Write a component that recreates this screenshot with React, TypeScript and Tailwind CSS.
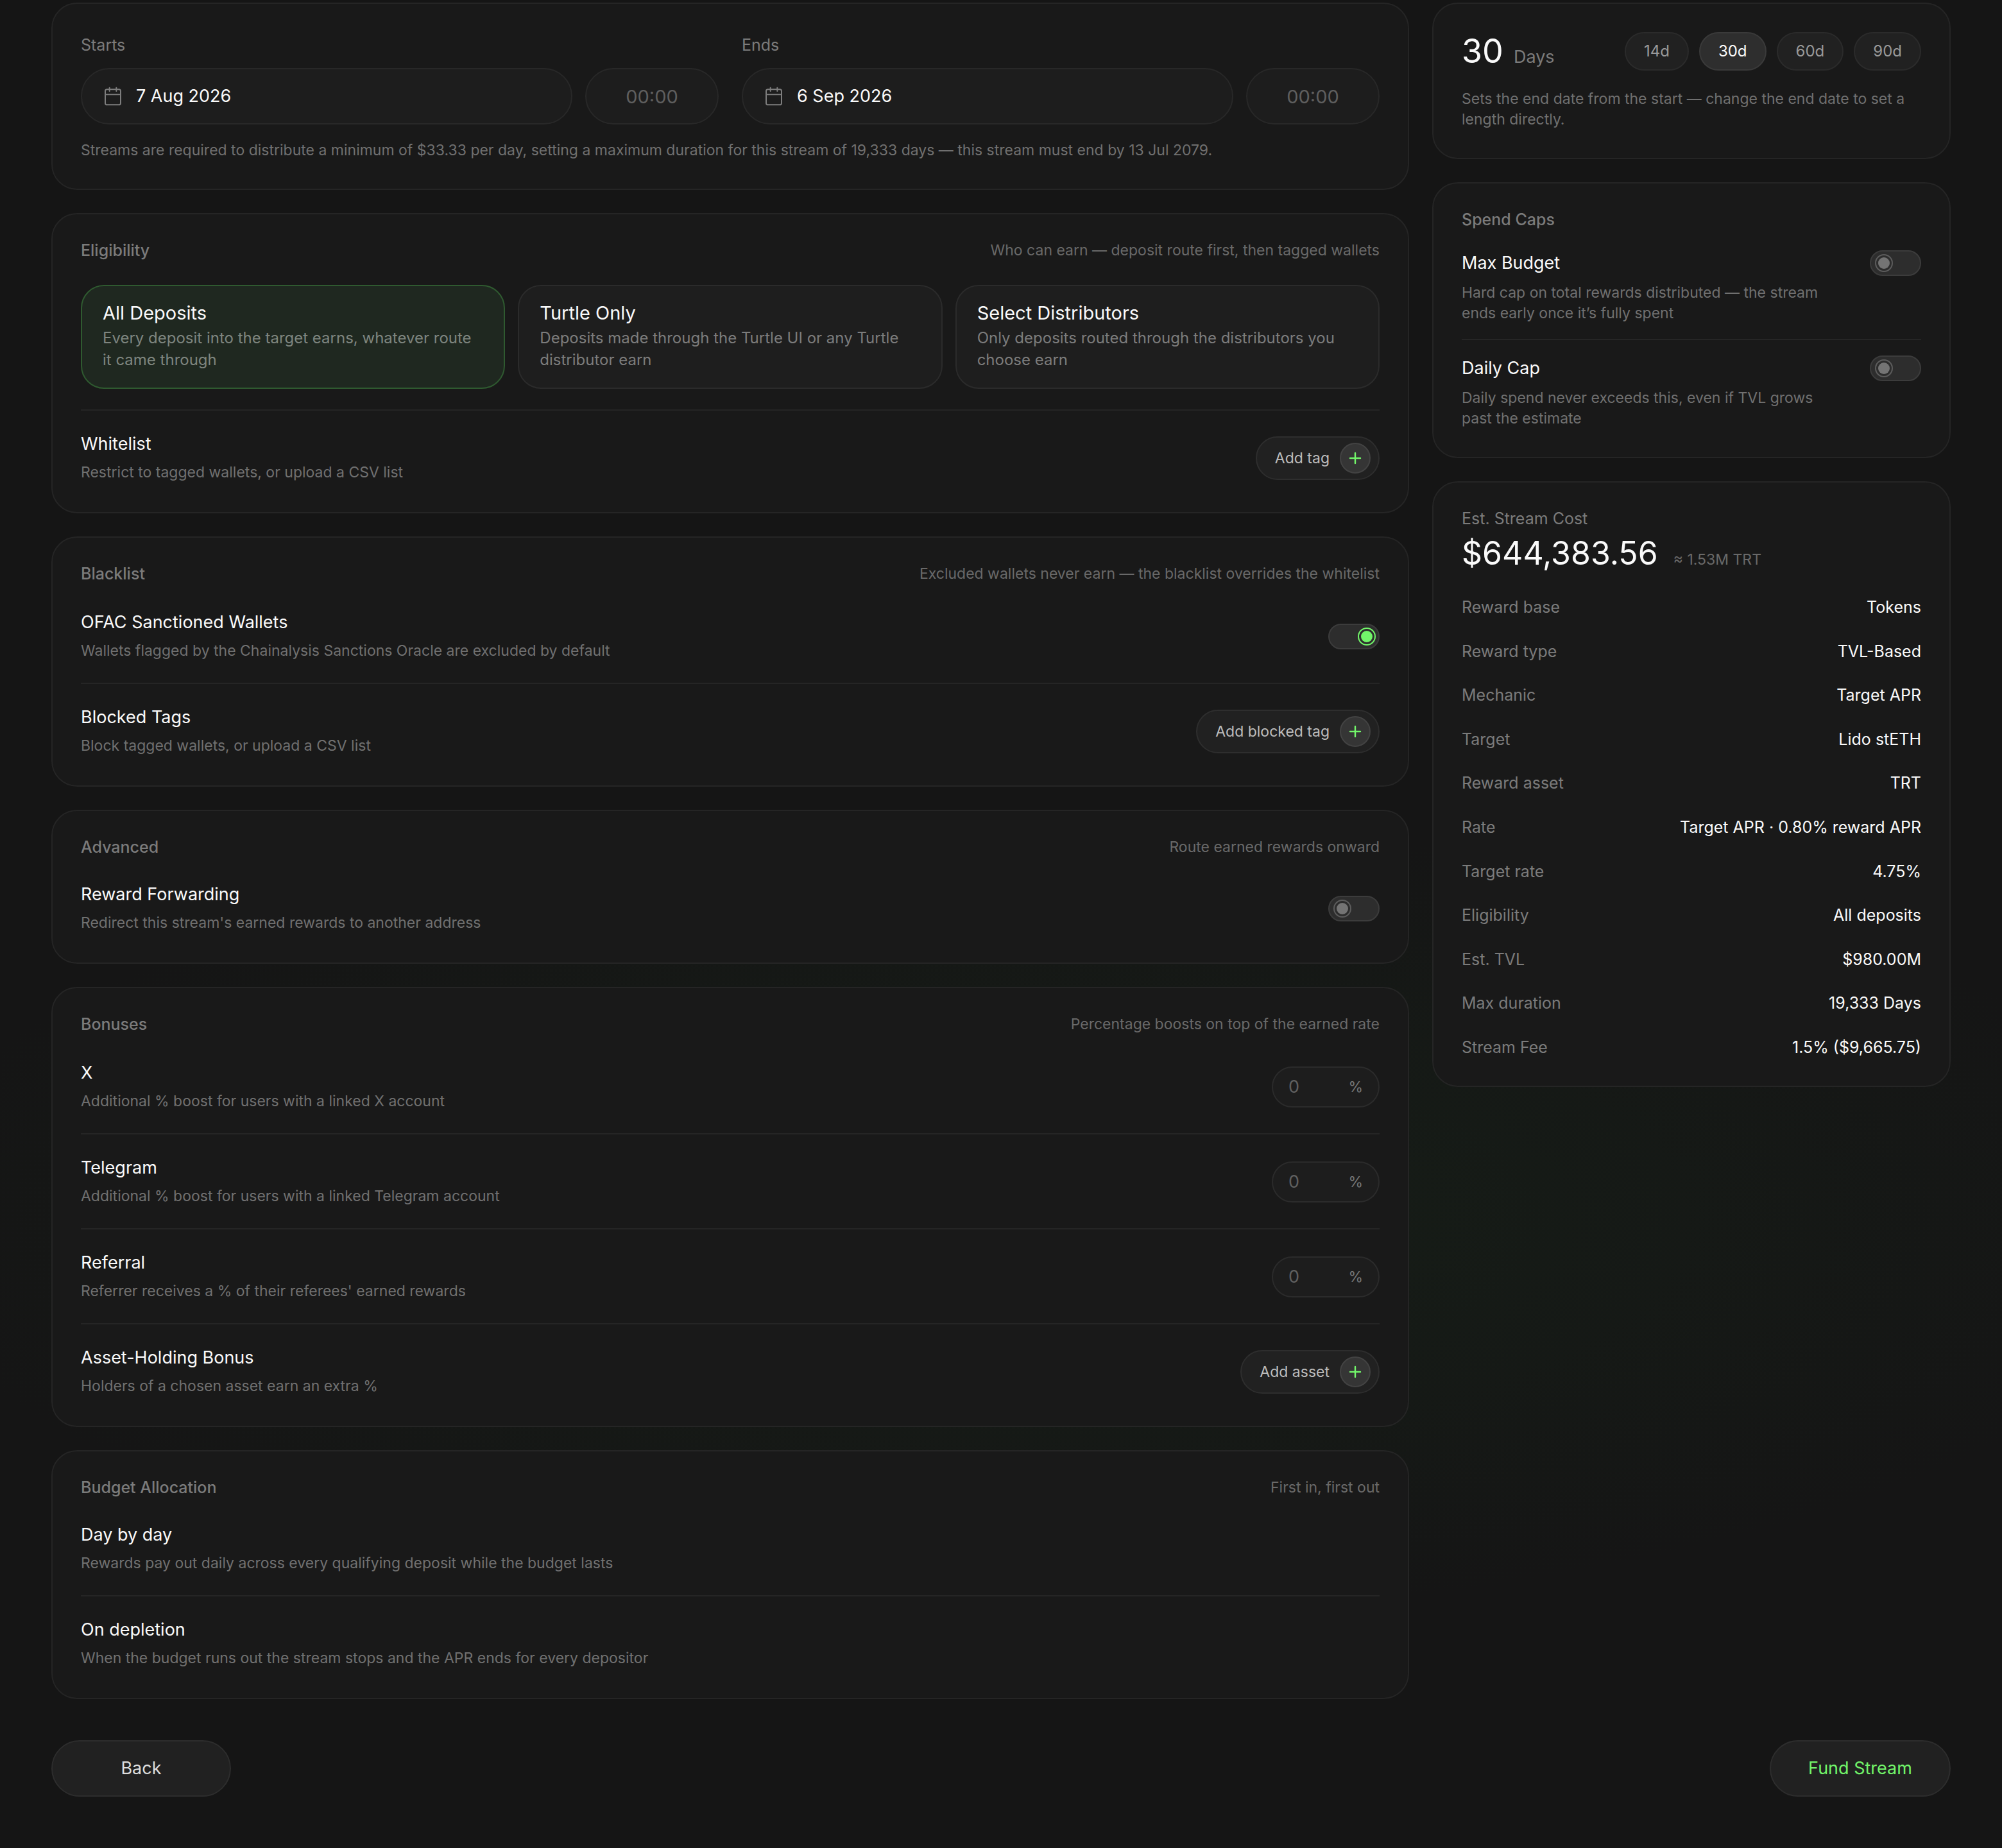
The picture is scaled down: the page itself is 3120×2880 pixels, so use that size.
import { useId, type ReactNode } from "react";
import { Calendar } from "lucide-react";

const hint = "text-[23px] leading-10 text-[#696969]";

function Card({ children, className = "" }: { children: ReactNode; className?: string }) {
  return (
    <section className={`rounded-[40px] border-2 border-[#252525] bg-[#191919] px-11 ${className}`}>{children}</section>
  );
}

function CardHeader({ title, note }: { title: string; note?: string }) {
  return (
    <header className="mb-1 flex items-center justify-between">
      <h2 className="text-[25px] leading-10 font-medium text-[#7b7b7b]">{title}</h2>
      {note && <p className={hint}>{note}</p>}
    </header>
  );
}

function Toggle({ id, on = false }: { id: string; on?: boolean }) {
  return (
    <input
      id={id}
      type="checkbox"
      role="switch"
      defaultChecked={on}
      className="flex h-10 w-20 shrink-0 appearance-none items-center rounded-full border-2 border-[#3c3c3c] bg-[#2d2d2d] px-1.5 text-[#747474] before:size-7 before:rounded-full before:border-2 before:border-[#5c5c5c] before:bg-current before:bg-clip-content before:p-[3px] before:content-[''] checked:justify-end checked:px-1 checked:text-[#72f56a] checked:before:border-current"
    />
  );
}

function AddButton({ children }: { children: string }) {
  return (
    <button
      type="button"
      className="flex h-[68px] items-center gap-4 rounded-full border-2 border-[#2e2e2e] bg-[#212121] pr-3 pl-7 text-[23px] text-[#bdbdbd]"
    >
      {children}
      <span className="flex size-12 items-center justify-center rounded-full border-2 border-[#434343] bg-[#353535] text-[#72f56a]">
        <svg viewBox="0 0 20 20" className="size-5" fill="none" stroke="currentColor" strokeWidth="2.4" strokeLinecap="round" aria-hidden="true">
          <path d="M10 2v16M2 10h16" />
        </svg>
      </span>
    </button>
  );
}

function PercentInput({ id }: { id: string }) {
  return (
    <span className="flex h-16 w-[168px] items-center rounded-full border-2 border-[#2b2b2b] bg-[#1d1d1d] px-6 text-[#777777]">
      <input
        id={id}
        inputMode="decimal"
        placeholder="0"
        className="w-full min-w-0 bg-transparent text-[27px] outline-none placeholder:text-[#606060]"
      />
      <span className="text-[23px]">%</span>
    </span>
  );
}

type RowProps = {
  title: string;
  text: string;
  divided?: boolean;
  compact?: boolean;
  control?: (id: string) => ReactNode;
};

function Row({ title, text, divided, compact, control }: RowProps) {
  const id = useId();
  return (
    <div
      className={`flex items-center justify-between gap-12 ${divided ? "border-t-2 border-[#252525]" : ""} ${
        compact ? "py-[30px]" : "pt-8 pb-[30px]"
      }`}
    >
      <div>
        <label htmlFor={id} className="block text-[27px] leading-10 text-[#fafafa]">
          {title}
        </label>
        <p className="mt-1 text-[23px] leading-10 text-[#707070]">{text}</p>
      </div>
      {control?.(id)}
    </div>
  );
}

function DateField({ label, date }: { label: string; date: string }) {
  const id = useId();
  return (
    <div className="min-w-0 flex-1">
      <label htmlFor={id} className="block text-[25px] leading-10 text-[#7b7b7b]">
        {label}
      </label>
      <div className="mt-4 flex gap-5">
        <div className="flex h-[88px] min-w-0 flex-1 items-center gap-5 rounded-full border-2 border-[#282828] bg-[#1d1d1d] px-8">
          <Calendar className="size-8 shrink-0 text-[#7d7d7d]" strokeWidth={1.5} aria-hidden="true" />
          <input id={id} defaultValue={date} className="w-full min-w-0 bg-transparent text-[27px] text-[#fafafa] outline-none" />
        </div>
        <input
          aria-label={`${label} time`}
          placeholder="00:00"
          className="h-[88px] w-52 rounded-full border-2 border-[#282828] bg-[#1d1d1d] text-center text-[29px] outline-none placeholder:text-[#5f5f5f]"
        />
      </div>
    </div>
  );
}

const routes = [
  { title: "All Deposits", text: "Every deposit into the target earns, whatever route it came through" },
  { title: "Turtle Only", text: "Deposits made through the Turtle UI or any Turtle distributor earn" },
  { title: "Select Distributors", text: "Only deposits routed through the distributors you choose earn" },
];

function RouteOptions() {
  return (
    <div className="mt-[34px] mb-8 grid grid-cols-3 gap-5">
      {routes.map((r, i) => (
        <button
          key={r.title}
          type="button"
          aria-pressed={i === 0}
          className={`rounded-[36px] border-2 px-8 pt-5 pb-[26px] text-left ${
            i === 0 ? "border-[#2f5a30] bg-[#1f2820]" : "border-[#2b2b2b] bg-[#1e1e1e]"
          }`}
        >
          <span className="block text-[29px] leading-[44px] text-[#fafafa]">{r.title}</span>
          <span className={`block text-[24px] leading-[34px] ${i === 0 ? "text-[#7e857f]" : "text-[#7c7c7c]"}`}>{r.text}</span>
        </button>
      ))}
    </div>
  );
}

function DurationCard() {
  return (
    <Card className="py-11">
      <div className="flex items-center justify-between">
        <p className="flex items-baseline gap-4">
          <span className="text-[52px] leading-[60px] text-[#fafafa]">30</span>
          <span className="text-[27px] text-[#7b7b7b]">Days</span>
        </p>
        <div className="flex gap-4">
          {["14d", "30d", "60d", "90d"].map((d) => (
            <button
              key={d}
              type="button"
              aria-pressed={d === "30d"}
              className={`h-[60px] rounded-full border-2 px-7 text-[24px] ${
                d === "30d" ? "border-[#3a3a3a] bg-[#2e2e2e] text-[#fafafa]" : "border-[#2b2b2b] bg-[#212121] text-[#999999]"
              }`}
            >
              {d}
            </button>
          ))}
        </div>
      </div>
      <p className="mt-7 text-[23px] leading-8 text-[#707070]">
        Sets the end date from the start — change the end date to set a length directly.
      </p>
    </Card>
  );
}

function CapRow({ title, text, divided }: { title: string; text: string; divided?: boolean }) {
  const id = useId();
  return (
    <div className={`flex items-start justify-between gap-14 py-6 ${divided ? "border-t-2 border-[#262626]" : ""}`}>
      <div>
        <label htmlFor={id} className="block text-[27px] leading-10 text-[#fafafa]">
          {title}
        </label>
        <p className="mt-2.5 text-[23px] leading-8 text-[#707070]">{text}</p>
      </div>
      <Toggle id={id} />
    </div>
  );
}

const summary = [
  ["Reward base", "Tokens"],
  ["Reward type", "TVL-Based"],
  ["Mechanic", "Target APR"],
  ["Target", "Lido stETH"],
  ["Reward asset", "TRT"],
  ["Rate", "Target APR · 0.80% reward APR"],
  ["Target rate", "4.75%"],
  ["Eligibility", "All deposits"],
  ["Est. TVL", "$980.00M"],
  ["Max duration", "19,333 Days"],
  ["Stream Fee", "1.5% ($9,665.75)"],
];

function CostCard() {
  return (
    <Card className="pt-9 pb-10">
      <h2 className="text-[25px] leading-10 text-[#7b7b7b]">Est. Stream Cost</h2>
      <p className="flex items-baseline gap-6">
        <span className="text-[50px] leading-[68px] text-[#fafafa]">$644,383.56</span>
        <span className="text-[23px] text-[#696969]">≈ 1.53M TRT</span>
      </p>
      <dl className="mt-[30px] flex h-[726px] flex-col justify-between text-[25px] leading-10">
        {summary.map(([k, v]) => (
          <div key={k} className="flex justify-between">
            <dt className="text-[#7b7b7b]">{k}</dt>
            <dd className="text-[#fafafa]">{v}</dd>
          </div>
        ))}
      </dl>
    </Card>
  );
}

export default function App() {
  return (
    <div className="min-h-screen bg-[#151515] bg-[radial-gradient(ellipse_58%_620px_at_52%_1900px,#161e17,#151515)] px-20 pt-1 pb-20 font-['Inter',sans-serif]">
      <main className="grid grid-cols-[minmax(0,1fr)_808px] items-start gap-9">
        <div className="flex flex-col gap-9">
          <Card className="py-11">
            <div className="flex gap-9">
              <DateField label="Starts" date="7 Aug 2026" />
              <DateField label="Ends" date="6 Sep 2026" />
            </div>
            <p className="mt-6 text-[23px] leading-8 text-[#707070]">
              Streams are required to distribute a minimum of $33.33 per day, setting a maximum duration for this stream of 19,333
              days — this stream must end by 13 Jul 2079.
            </p>
          </Card>

          <Card className="pt-9 pb-3">
            <CardHeader title="Eligibility" note="Who can earn — deposit route first, then tagged wallets" />
            <RouteOptions />
            <Row
              divided
              title="Whitelist"
              text="Restrict to tagged wallets, or upload a CSV list"
              control={() => <AddButton>Add tag</AddButton>}
            />
          </Card>

          <Card className="pt-9 pb-3">
            <CardHeader title="Blacklist" note="Excluded wallets never earn — the blacklist overrides the whitelist" />
            <Row
              title="OFAC Sanctioned Wallets"
              text="Wallets flagged by the Chainalysis Sanctions Oracle are excluded by default"
              control={(id) => <Toggle id={id} on />}
            />
            <Row
              divided
              title="Blocked Tags"
              text="Block tagged wallets, or upload a CSV list"
              control={() => <AddButton>Add blocked tag</AddButton>}
            />
          </Card>

          <Card className="pt-9 pb-3">
            <CardHeader title="Advanced" note="Route earned rewards onward" />
            <Row
              compact
              title="Reward Forwarding"
              text="Redirect this stream's earned rewards to another address"
              control={(id) => <Toggle id={id} />}
            />
          </Card>

          <Card className="pt-9 pb-3">
            <CardHeader title="Bonuses" note="Percentage boosts on top of the earned rate" />
            <Row title="X" text="Additional % boost for users with a linked X account" control={(id) => <PercentInput id={id} />} />
            <Row
              divided
              title="Telegram"
              text="Additional % boost for users with a linked Telegram account"
              control={(id) => <PercentInput id={id} />}
            />
            <Row
              divided
              title="Referral"
              text="Referrer receives a % of their referees' earned rewards"
              control={(id) => <PercentInput id={id} />}
            />
            <Row
              divided
              title="Asset-Holding Bonus"
              text="Holders of a chosen asset earn an extra %"
              control={() => <AddButton>Add asset</AddButton>}
            />
          </Card>

          <Card className="pt-9 pb-3">
            <CardHeader title="Budget Allocation" note="First in, first out" />
            <Row compact title="Day by day" text="Rewards pay out daily across every qualifying deposit while the budget lasts" />
            <Row divided title="On depletion" text="When the budget runs out the stream stops and the APR ends for every depositor" />
          </Card>
        </div>

        <aside className="flex flex-col gap-9">
          <DurationCard />
          <Card className="pt-9 pb-5">
            <CardHeader title="Spend Caps" />
            <CapRow title="Max Budget" text="Hard cap on total rewards distributed — the stream ends early once it’s fully spent" />
            <CapRow divided title="Daily Cap" text="Daily spend never exceeds this, even if TVL grows past the estimate" />
          </Card>
          <CostCard />
        </aside>
      </main>

      <footer className="mt-16 flex justify-between">
        <button type="button" className="h-[88px] w-[280px] rounded-full border-2 border-[#2d2d2d] bg-[#212121] text-[27px] text-[#dedede]">
          Back
        </button>
        <button type="button" className="h-[88px] w-[282px] rounded-full border-2 border-[#2d2d2d] bg-[#212121] text-[27px] text-[#72f56a]">
          Fund Stream
        </button>
      </footer>
    </div>
  );
}
